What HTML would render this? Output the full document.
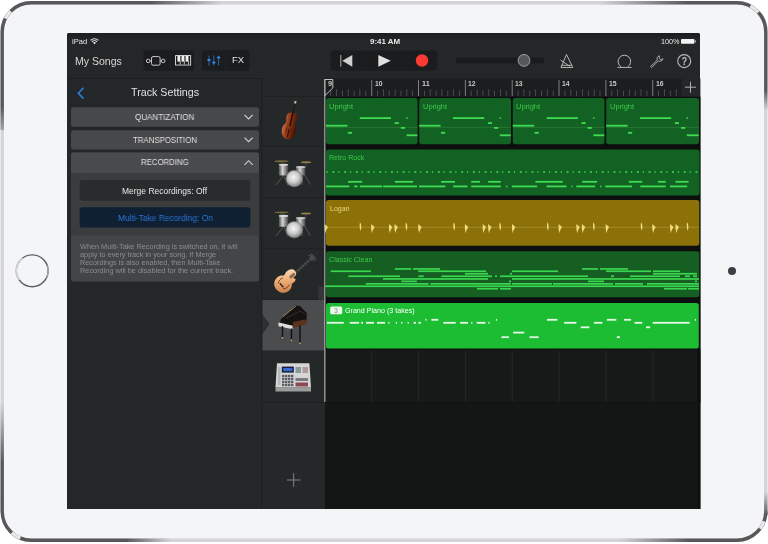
<!DOCTYPE html><html><head><meta charset="utf-8"><style>
*{margin:0;padding:0;box-sizing:border-box}
html,body{width:768px;height:544px;overflow:hidden;background:#fff;font-family:"Liberation Sans",sans-serif}
.a{position:absolute}
#screen{left:67px;top:33px;width:633.4px;height:476px;background:#252628;border-radius:2px;overflow:hidden}
.t{position:absolute;white-space:nowrap;line-height:1;will-change:transform}
</style></head><body><svg class="a" style="left:0;top:0" width="768" height="544" viewBox="0 0 768 544"><defs><linearGradient id="gT1" gradientUnits="userSpaceOnUse" x1="150" x2="222" y1="0" y2="0"><stop offset="0" stop-color="#58585b"/><stop offset="1" stop-color="#d4d4d6"/></linearGradient><linearGradient id="gT2" gradientUnits="userSpaceOnUse" x1="600" x2="688" y1="0" y2="0"><stop offset="0" stop-color="#d4d4d6"/><stop offset="1" stop-color="#58585b"/></linearGradient><linearGradient id="gB1" gradientUnits="userSpaceOnUse" x1="126" x2="170" y1="0" y2="0"><stop offset="0" stop-color="#58585b"/><stop offset="1" stop-color="#d4d4d6"/></linearGradient><linearGradient id="gB2" gradientUnits="userSpaceOnUse" x1="620" x2="690" y1="0" y2="0"><stop offset="0" stop-color="#d4d4d6"/><stop offset="1" stop-color="#58585b"/></linearGradient><linearGradient id="gL1" gradientUnits="userSpaceOnUse" x1="0" x2="0" y1="107" y2="145"><stop offset="0" stop-color="#58585b"/><stop offset="1" stop-color="#d4d4d6"/></linearGradient><linearGradient id="gL2" gradientUnits="userSpaceOnUse" x1="0" x2="0" y1="404" y2="463"><stop offset="0" stop-color="#d4d4d6"/><stop offset="1" stop-color="#58585b"/></linearGradient><linearGradient id="gR1" gradientUnits="userSpaceOnUse" x1="0" x2="0" y1="90" y2="110"><stop offset="0" stop-color="#58585b"/><stop offset="1" stop-color="#d4d4d6"/></linearGradient><linearGradient id="gR2" gradientUnits="userSpaceOnUse" x1="0" x2="0" y1="492" y2="515"><stop offset="0" stop-color="#d4d4d6"/><stop offset="1" stop-color="#58585b"/></linearGradient></defs><rect x="2.2" y="2.7" width="763.6" height="537.6" rx="29" fill="#f4f5f7" stroke="#d4d4d6" stroke-width="3.4"/><path d="M2.2,107 V31.7 A29,29 0 0 1 31.2,2.7 H150" stroke="#58585b" stroke-width="3.4" fill="none"/><path d="M688,2.7 H736.8 A29,29 0 0 1 765.8,31.7 V90" stroke="#58585b" stroke-width="3.4" fill="none"/><path d="M765.8,515 V511.29999999999995 A29,29 0 0 1 736.8,540.3 H690" stroke="#58585b" stroke-width="3.4" fill="none"/><path d="M126,540.3 H31.2 A29,29 0 0 1 2.2,511.29999999999995 V463" stroke="#58585b" stroke-width="3.4" fill="none"/><path d="M150,2.7 H222" stroke="url(#gT1)" stroke-width="3.4" fill="none"/><path d="M600,2.7 H688" stroke="url(#gT2)" stroke-width="3.4" fill="none"/><path d="M126,540.3 H170" stroke="url(#gB1)" stroke-width="3.4" fill="none"/><path d="M620,540.3 H690" stroke="url(#gB2)" stroke-width="3.4" fill="none"/><path d="M2.2,107 V130" stroke="url(#gL1)" stroke-width="3.4" fill="none"/><path d="M2.2,404 V463" stroke="url(#gL2)" stroke-width="3.4" fill="none"/><path d="M765.8,90 V110" stroke="url(#gR1)" stroke-width="3.4" fill="none"/><path d="M765.8,492 V515" stroke="url(#gR2)" stroke-width="3.4" fill="none"/><path d="M5.36,18.53 A29,29 0 0 1 10.69,11.19" stroke="#e8e8ea" stroke-width="3.4" fill="none"/><path d="M750.41,6.09 A29,29 0 0 1 758.35,12.30" stroke="#e8e8ea" stroke-width="3.4" fill="none"/><path d="M20.34,538.19 A29,29 0 0 1 11.80,532.85" stroke="#e8e8ea" stroke-width="3.4" fill="none"/><path d="M764.05,521.22 A29,29 0 0 1 759.96,528.75" stroke="#e8e8ea" stroke-width="3.4" fill="none"/></svg><svg class="a" style="left:0;top:230px" width="70" height="80" viewBox="0 230 70 80"><defs><linearGradient id="hb" x1="0" x2="1" y1="0" y2="1"><stop offset="0" stop-color="#c8c8ca"/><stop offset=".35" stop-color="#5a5a5c"/><stop offset=".6" stop-color="#9a9a9c"/><stop offset="1" stop-color="#4a4a4c"/></linearGradient></defs><circle cx="32.2" cy="270.8" r="15.9" fill="none" stroke="#5c5c5e" stroke-width="1.4"/><path d="M19.2,280 A15.9,15.9 0 0 1 22.5,258.2" fill="none" stroke="#d6d6d8" stroke-width="1.6"/><path d="M46.6,277.5 A15.9,15.9 0 0 0 47.5,266" fill="none" stroke="#a6a6a8" stroke-width="1.5"/></svg><div class="a" style="left:727.7px;top:266.6px;width:8.6px;height:8.6px;border-radius:50%;background:#3b3e46"></div><div id="screen" class="a"><div class="a" style="left:0;top:0;width:100%;height:7px;background:linear-gradient(#1b1c1e,#252628)"></div></div><svg class="a" style="left:0;top:0" width="768" height="544" viewBox="0 0 768 544"><rect x="67" y="78.6" width="195" height="430.4" fill="#24272a"/><rect x="67" y="78.2" width="195" height="0.8" fill="#1b1c1e"/><rect x="261.5" y="78.6" width="1" height="430.4" fill="#1b1c1e"/><rect x="71" y="107.3" width="188" height="19.5" rx="2.5" fill="#47484a"/><rect x="71" y="130.2" width="188" height="19.3" rx="2.5" fill="#47484a"/><rect x="71" y="152.6" width="188" height="129" rx="2.5" fill="#444547"/><rect x="71" y="152.6" width="188" height="20.3" rx="2.5" fill="#4a4b4d"/><rect x="71" y="172.9" width="188" height="62.5" fill="#3b3c3e"/><rect x="79.7" y="180" width="170.6" height="20.8" rx="2.5" fill="#2a2b2d"/><rect x="79.7" y="207.3" width="170.6" height="20.3" rx="2.5" fill="#0f2033"/><polyline points="244.5,114.8 248.6,118.9 252.7,114.8" fill="none" stroke="#d0d0d0" stroke-width="1.1"/><polyline points="244.5,137.6 248.6,141.7 252.7,137.6" fill="none" stroke="#d0d0d0" stroke-width="1.1"/><polyline points="244.5,164.8 248.6,160.7 252.7,164.8" fill="none" stroke="#d0d0d0" stroke-width="1.1"/><polyline points="83.5,87.8 78.3,93.2 83.5,98.6" fill="none" stroke="#2f7de0" stroke-width="1.6"/><rect x="262.5" y="78.6" width="62.5" height="430.4" fill="#252829"/><rect x="262.5" y="96.1" width="62.5" height="0.8" fill="#1d1f21"/><rect x="262.5" y="146.1" width="62.5" height="0.8" fill="#1d1f21"/><rect x="262.5" y="197.2" width="62.5" height="0.8" fill="#1d1f21"/><rect x="262.5" y="248.3" width="62.5" height="0.8" fill="#1d1f21"/><rect x="262.5" y="299.4" width="62.5" height="0.8" fill="#1d1f21"/><rect x="262.5" y="350.1" width="62.5" height="0.8" fill="#1d1f21"/><rect x="262.5" y="401.5" width="62.5" height="0.8" fill="#1d1f21"/><path d="M262.5,299.9 H324.8 V350.4 H262.5 V333.6 L269.4,324.2 L262.5,314.8 Z" fill="#4b4c4e"/><path d="M262.5,314.8 L269.4,324.2 L262.5,333.6 Z" fill="#2e3032"/><path d="M287,480 H300.5 M293.7,473.2 V486.8" stroke="#8e8e8e" stroke-width="0.9"/><rect x="325" y="96.5" width="375.4" height="412.5" fill="#141616"/><rect x="697.6" y="349.5" width="2.8" height="159.5" fill="#0f1010"/><rect x="325" y="96.5" width="375.4" height="306" fill="#0d0e0e"/><rect x="325" y="349.5" width="372.6" height="52.5" fill="#171919"/><rect x="371.3" y="350.6" width="0.9" height="51.4" fill="#262728"/><rect x="418.1" y="350.6" width="0.9" height="51.4" fill="#262728"/><rect x="465.0" y="350.6" width="0.9" height="51.4" fill="#262728"/><rect x="511.8" y="350.6" width="0.9" height="51.4" fill="#262728"/><rect x="558.6" y="350.6" width="0.9" height="51.4" fill="#262728"/><rect x="605.5" y="350.6" width="0.9" height="51.4" fill="#262728"/><rect x="652.4" y="350.6" width="0.9" height="51.4" fill="#262728"/><rect x="325" y="78.6" width="356.7" height="18" fill="#1c1d1f"/><rect x="681.7" y="78.6" width="18.7" height="18" fill="#252628"/><path d="M685,87.2 H696 M690.5,81.7 V92.7" stroke="#b0b0b0" stroke-width="1"/><rect x="324.3" y="80" width="1" height="16" fill="#7e7e7e"/><rect x="330.3" y="90.6" width="0.8" height="5.7" fill="#545557"/><rect x="336.1" y="89.2" width="0.8" height="7.1" fill="#545557"/><rect x="342.0" y="90.6" width="0.8" height="5.7" fill="#545557"/><rect x="347.8" y="89.2" width="0.8" height="7.1" fill="#545557"/><rect x="353.7" y="90.6" width="0.8" height="5.7" fill="#545557"/><rect x="359.5" y="89.2" width="0.8" height="7.1" fill="#545557"/><rect x="365.4" y="90.6" width="0.8" height="5.7" fill="#545557"/><rect x="371.2" y="80" width="1" height="16" fill="#7e7e7e"/><rect x="377.1" y="90.6" width="0.8" height="5.7" fill="#545557"/><rect x="383.0" y="89.2" width="0.8" height="7.1" fill="#545557"/><rect x="388.8" y="90.6" width="0.8" height="5.7" fill="#545557"/><rect x="394.7" y="89.2" width="0.8" height="7.1" fill="#545557"/><rect x="400.5" y="90.6" width="0.8" height="5.7" fill="#545557"/><rect x="406.4" y="89.2" width="0.8" height="7.1" fill="#545557"/><rect x="412.2" y="90.6" width="0.8" height="5.7" fill="#545557"/><rect x="418.0" y="80" width="1" height="16" fill="#7e7e7e"/><rect x="424.0" y="90.6" width="0.8" height="5.7" fill="#545557"/><rect x="429.8" y="89.2" width="0.8" height="7.1" fill="#545557"/><rect x="435.7" y="90.6" width="0.8" height="5.7" fill="#545557"/><rect x="441.5" y="89.2" width="0.8" height="7.1" fill="#545557"/><rect x="447.4" y="90.6" width="0.8" height="5.7" fill="#545557"/><rect x="453.2" y="89.2" width="0.8" height="7.1" fill="#545557"/><rect x="459.1" y="90.6" width="0.8" height="5.7" fill="#545557"/><rect x="464.9" y="80" width="1" height="16" fill="#7e7e7e"/><rect x="470.8" y="90.6" width="0.8" height="5.7" fill="#545557"/><rect x="476.7" y="89.2" width="0.8" height="7.1" fill="#545557"/><rect x="482.5" y="90.6" width="0.8" height="5.7" fill="#545557"/><rect x="488.4" y="89.2" width="0.8" height="7.1" fill="#545557"/><rect x="494.2" y="90.6" width="0.8" height="5.7" fill="#545557"/><rect x="500.1" y="89.2" width="0.8" height="7.1" fill="#545557"/><rect x="505.9" y="90.6" width="0.8" height="5.7" fill="#545557"/><rect x="511.7" y="80" width="1" height="16" fill="#7e7e7e"/><rect x="517.7" y="90.6" width="0.8" height="5.7" fill="#545557"/><rect x="523.5" y="89.2" width="0.8" height="7.1" fill="#545557"/><rect x="529.4" y="90.6" width="0.8" height="5.7" fill="#545557"/><rect x="535.2" y="89.2" width="0.8" height="7.1" fill="#545557"/><rect x="541.1" y="90.6" width="0.8" height="5.7" fill="#545557"/><rect x="546.9" y="89.2" width="0.8" height="7.1" fill="#545557"/><rect x="552.8" y="90.6" width="0.8" height="5.7" fill="#545557"/><rect x="558.5" y="80" width="1" height="16" fill="#7e7e7e"/><rect x="564.5" y="90.6" width="0.8" height="5.7" fill="#545557"/><rect x="570.4" y="89.2" width="0.8" height="7.1" fill="#545557"/><rect x="576.2" y="90.6" width="0.8" height="5.7" fill="#545557"/><rect x="582.1" y="89.2" width="0.8" height="7.1" fill="#545557"/><rect x="587.9" y="90.6" width="0.8" height="5.7" fill="#545557"/><rect x="593.8" y="89.2" width="0.8" height="7.1" fill="#545557"/><rect x="599.6" y="90.6" width="0.8" height="5.7" fill="#545557"/><rect x="605.4" y="80" width="1" height="16" fill="#7e7e7e"/><rect x="611.4" y="90.6" width="0.8" height="5.7" fill="#545557"/><rect x="617.2" y="89.2" width="0.8" height="7.1" fill="#545557"/><rect x="623.1" y="90.6" width="0.8" height="5.7" fill="#545557"/><rect x="628.9" y="89.2" width="0.8" height="7.1" fill="#545557"/><rect x="634.8" y="90.6" width="0.8" height="5.7" fill="#545557"/><rect x="640.6" y="89.2" width="0.8" height="7.1" fill="#545557"/><rect x="646.5" y="90.6" width="0.8" height="5.7" fill="#545557"/><rect x="652.2" y="80" width="1" height="16" fill="#7e7e7e"/><rect x="658.2" y="90.6" width="0.8" height="5.7" fill="#545557"/><rect x="664.1" y="89.2" width="0.8" height="7.1" fill="#545557"/><rect x="669.9" y="90.6" width="0.8" height="5.7" fill="#545557"/><rect x="675.8" y="89.2" width="0.8" height="7.1" fill="#545557"/><rect x="326" y="98" width="91.6" height="46.2" rx="2.6" fill="#126224"/><rect x="326" y="126.9" width="91.6" height="0.7" fill="#2f7c38"/><g fill="#3fdc52"><rect x="325.9" y="124.8" width="21.5" height="1.8"/><rect x="347.8" y="131.9" width="4.2" height="1.8"/><rect x="359.8" y="117.2" width="31.2" height="1.8"/><rect x="394.7" y="122.2" width="4.1" height="1.8"/><rect x="406.4" y="117.2" width="1.2" height="1.8"/><rect x="400.8" y="127.0" width="4.2" height="1.8"/><rect x="406.6" y="134.4" width="10.7" height="1.8"/></g><rect x="419.2" y="98" width="91.8" height="46.2" rx="2.6" fill="#126224"/><rect x="419.2" y="126.9" width="91.8" height="0.7" fill="#2f7c38"/><g fill="#3fdc52"><rect x="419.1" y="124.8" width="21.5" height="1.8"/><rect x="441.0" y="131.9" width="4.2" height="1.8"/><rect x="453.0" y="117.2" width="31.2" height="1.8"/><rect x="487.9" y="122.2" width="4.1" height="1.8"/><rect x="499.6" y="117.2" width="1.2" height="1.8"/><rect x="494.0" y="127.0" width="4.2" height="1.8"/><rect x="499.8" y="134.4" width="10.9" height="1.8"/></g><rect x="512.8" y="98" width="91.7" height="46.2" rx="2.6" fill="#126224"/><rect x="512.8" y="126.9" width="91.7" height="0.7" fill="#2f7c38"/><g fill="#3fdc52"><rect x="512.7" y="124.8" width="21.5" height="1.8"/><rect x="534.6" y="131.9" width="4.2" height="1.8"/><rect x="546.6" y="117.2" width="31.2" height="1.8"/><rect x="581.5" y="122.2" width="4.1" height="1.8"/><rect x="593.2" y="117.2" width="1.2" height="1.8"/><rect x="587.6" y="127.0" width="4.2" height="1.8"/><rect x="593.4" y="134.4" width="10.8" height="1.8"/></g><rect x="606.2" y="98" width="92.8" height="46.2" rx="2.6" fill="#126224"/><rect x="606.2" y="126.9" width="92.8" height="0.7" fill="#2f7c38"/><g fill="#3fdc52"><rect x="606.1" y="124.8" width="21.5" height="1.8"/><rect x="628.0" y="131.9" width="4.2" height="1.8"/><rect x="640.0" y="117.2" width="31.2" height="1.8"/><rect x="674.9" y="122.2" width="4.1" height="1.8"/><rect x="686.6" y="117.2" width="1.2" height="1.8"/><rect x="681.0" y="127.0" width="4.2" height="1.8"/><rect x="686.8" y="134.4" width="11.9" height="1.8"/></g><rect x="326" y="149.5" width="373.5" height="46.1" rx="2.6" fill="#126224"/><g fill="#3fdc52"><rect x="326.5" y="171.2" width="1.2" height="1.5"/><rect x="332.4" y="171.2" width="2.0" height="1.5"/><rect x="338.2" y="171.2" width="1.2" height="1.5"/><rect x="344.1" y="171.2" width="2.0" height="1.5"/><rect x="349.9" y="171.2" width="1.2" height="1.5"/><rect x="355.8" y="171.2" width="2.0" height="1.5"/><rect x="361.6" y="171.2" width="1.2" height="1.5"/><rect x="367.5" y="171.2" width="2.0" height="1.5"/><rect x="373.3" y="171.2" width="1.2" height="1.5"/><rect x="379.2" y="171.2" width="2.0" height="1.5"/><rect x="385.1" y="171.2" width="1.2" height="1.5"/><rect x="390.9" y="171.2" width="2.0" height="1.5"/><rect x="396.8" y="171.2" width="1.2" height="1.5"/><rect x="402.6" y="171.2" width="2.0" height="1.5"/><rect x="408.5" y="171.2" width="1.2" height="1.5"/><rect x="414.3" y="171.2" width="2.0" height="1.5"/><rect x="420.2" y="171.2" width="1.2" height="1.5"/><rect x="426.1" y="171.2" width="2.0" height="1.5"/><rect x="431.9" y="171.2" width="1.2" height="1.5"/><rect x="437.8" y="171.2" width="2.0" height="1.5"/><rect x="443.6" y="171.2" width="1.2" height="1.5"/><rect x="449.5" y="171.2" width="2.0" height="1.5"/><rect x="455.3" y="171.2" width="1.2" height="1.5"/><rect x="461.2" y="171.2" width="2.0" height="1.5"/><rect x="467.0" y="171.2" width="1.2" height="1.5"/><rect x="472.9" y="171.2" width="2.0" height="1.5"/><rect x="478.8" y="171.2" width="1.2" height="1.5"/><rect x="484.6" y="171.2" width="2.0" height="1.5"/><rect x="490.5" y="171.2" width="1.2" height="1.5"/><rect x="496.3" y="171.2" width="2.0" height="1.5"/><rect x="502.2" y="171.2" width="1.2" height="1.5"/><rect x="508.0" y="171.2" width="2.0" height="1.5"/><rect x="513.9" y="171.2" width="1.2" height="1.5"/><rect x="519.8" y="171.2" width="2.0" height="1.5"/><rect x="525.6" y="171.2" width="1.2" height="1.5"/><rect x="531.5" y="171.2" width="2.0" height="1.5"/><rect x="537.3" y="171.2" width="1.2" height="1.5"/><rect x="543.2" y="171.2" width="2.0" height="1.5"/><rect x="549.0" y="171.2" width="1.2" height="1.5"/><rect x="554.9" y="171.2" width="2.0" height="1.5"/><rect x="560.8" y="171.2" width="1.2" height="1.5"/><rect x="566.6" y="171.2" width="2.0" height="1.5"/><rect x="572.5" y="171.2" width="1.2" height="1.5"/><rect x="578.3" y="171.2" width="2.0" height="1.5"/><rect x="584.2" y="171.2" width="1.2" height="1.5"/><rect x="590.0" y="171.2" width="2.0" height="1.5"/><rect x="595.9" y="171.2" width="1.2" height="1.5"/><rect x="601.7" y="171.2" width="2.0" height="1.5"/><rect x="607.6" y="171.2" width="1.2" height="1.5"/><rect x="613.5" y="171.2" width="2.0" height="1.5"/><rect x="619.3" y="171.2" width="1.2" height="1.5"/><rect x="625.2" y="171.2" width="2.0" height="1.5"/><rect x="631.0" y="171.2" width="1.2" height="1.5"/><rect x="636.9" y="171.2" width="2.0" height="1.5"/><rect x="642.7" y="171.2" width="1.2" height="1.5"/><rect x="648.6" y="171.2" width="2.0" height="1.5"/><rect x="654.5" y="171.2" width="1.2" height="1.5"/><rect x="660.3" y="171.2" width="2.0" height="1.5"/><rect x="666.2" y="171.2" width="1.2" height="1.5"/><rect x="672.0" y="171.2" width="2.0" height="1.5"/><rect x="677.9" y="171.2" width="1.2" height="1.5"/><rect x="683.7" y="171.2" width="2.0" height="1.5"/><rect x="689.6" y="171.2" width="1.2" height="1.5"/><rect x="695.4" y="171.2" width="2.0" height="1.5"/><rect x="348.0" y="180.9" width="14.1" height="1.8"/><rect x="394.9" y="180.9" width="18.2" height="1.8"/><rect x="441.1" y="180.9" width="13.9" height="1.8"/><rect x="471.2" y="180.9" width="8.7" height="1.8"/><rect x="488.2" y="180.9" width="12.6" height="1.8"/><rect x="535.4" y="180.9" width="27.4" height="1.8"/><rect x="582.2" y="180.9" width="14.8" height="1.8"/><rect x="628.8" y="180.9" width="13.5" height="1.8"/><rect x="658.0" y="180.9" width="7.7" height="1.8"/><rect x="675.5" y="180.9" width="13.0" height="1.8"/><rect x="326.0" y="185.5" width="23.3" height="1.8"/><rect x="354.3" y="185.5" width="3.2" height="1.8"/><rect x="359.8" y="185.5" width="22.4" height="1.8"/><rect x="383.2" y="185.5" width="33.8" height="1.8"/><rect x="419.0" y="185.5" width="26.4" height="1.8"/><rect x="453.1" y="185.5" width="14.4" height="1.8"/><rect x="471.2" y="185.5" width="29.6" height="1.8"/><rect x="506.2" y="185.5" width="1.2" height="1.8"/><rect x="511.9" y="185.5" width="25.3" height="1.8"/><rect x="546.5" y="185.5" width="20.0" height="1.8"/><rect x="571.5" y="185.5" width="1.2" height="1.8"/><rect x="576.3" y="185.5" width="18.8" height="1.8"/><rect x="600.2" y="185.5" width="1.2" height="1.8"/><rect x="605.3" y="185.5" width="26.8" height="1.8"/><rect x="640.4" y="185.5" width="25.3" height="1.8"/><rect x="670.0" y="185.5" width="17.2" height="1.8"/></g><rect x="326" y="200.1" width="373.3" height="45.6" rx="2.6" fill="#8c7109"/><rect x="326" y="226.9" width="373" height="0.6" fill="#b89a3a"/><g fill="#f2dc7a"><path d="M324.6,224.1 L328.0,227.1 L326.2,230.3 L325.4,233.3 L324.6,229.3 Z"/><path d="M360.0,222.3 C361.6,224.3 361.6,228.3 360.6,230.8 C359.4,228.3 359.4,224.3 360.0,222.3 Z"/><path d="M371.2,224.1 L374.6,227.1 L372.8,230.3 L372.0,233.3 L371.2,229.3 Z"/><path d="M389.0,224.1 L392.4,227.1 L390.6,230.3 L389.8,233.3 L389.0,229.3 Z"/><path d="M394.5,224.1 L397.9,227.1 L396.1,230.3 L395.3,233.3 L394.5,229.3 Z"/><path d="M406.0,222.3 C407.6,224.3 407.6,228.3 406.6,230.8 C405.4,228.3 405.4,224.3 406.0,222.3 Z"/><path d="M418.3,224.1 L421.7,227.1 L419.9,230.3 L419.1,233.3 L418.3,229.3 Z"/><path d="M453.7,222.3 C455.3,224.3 455.3,228.3 454.3,230.8 C453.1,228.3 453.1,224.3 453.7,222.3 Z"/><path d="M464.9,224.1 L468.3,227.1 L466.5,230.3 L465.7,233.3 L464.9,229.3 Z"/><path d="M482.7,224.1 L486.1,227.1 L484.3,230.3 L483.5,233.3 L482.7,229.3 Z"/><path d="M488.2,224.1 L491.6,227.1 L489.8,230.3 L489.0,233.3 L488.2,229.3 Z"/><path d="M499.7,222.3 C501.3,224.3 501.3,228.3 500.3,230.8 C499.1,228.3 499.1,224.3 499.7,222.3 Z"/><path d="M512.0,224.1 L515.4,227.1 L513.6,230.3 L512.8,233.3 L512.0,229.3 Z"/><path d="M547.4,222.3 C549.0,224.3 549.0,228.3 548.0,230.8 C546.8,228.3 546.8,224.3 547.4,222.3 Z"/><path d="M558.6,224.1 L562.0,227.1 L560.2,230.3 L559.4,233.3 L558.6,229.3 Z"/><path d="M576.4,224.1 L579.8,227.1 L578.0,230.3 L577.2,233.3 L576.4,229.3 Z"/><path d="M581.9,224.1 L585.3,227.1 L583.5,230.3 L582.7,233.3 L581.9,229.3 Z"/><path d="M593.4,222.3 C595.0,224.3 595.0,228.3 594.0,230.8 C592.8,228.3 592.8,224.3 593.4,222.3 Z"/><path d="M605.7,224.1 L609.1,227.1 L607.3,230.3 L606.5,233.3 L605.7,229.3 Z"/><path d="M641.1,222.3 C642.7,224.3 642.7,228.3 641.7,230.8 C640.5,228.3 640.5,224.3 641.1,222.3 Z"/><path d="M652.3,224.1 L655.7,227.1 L653.9,230.3 L653.1,233.3 L652.3,229.3 Z"/><path d="M670.1,224.1 L673.5,227.1 L671.7,230.3 L670.9,233.3 L670.1,229.3 Z"/><path d="M675.6,224.1 L679.0,227.1 L677.2,230.3 L676.4,233.3 L675.6,229.3 Z"/><path d="M687.1,222.3 C688.7,224.3 688.7,228.3 687.7,230.8 C686.5,228.3 686.5,224.3 687.1,222.3 Z"/></g><rect x="326" y="251.3" width="373.3" height="45.9" rx="2.6" fill="#155f23"/><g fill="#3bd64f"><rect x="394.9" y="268.1" width="16.4" height="1.7"/><rect x="413.1" y="268.1" width="27.0" height="1.7"/><rect x="582.0" y="268.1" width="16.0" height="1.7"/><rect x="600.0" y="268.1" width="28.0" height="1.7"/><rect x="330.7" y="270.4" width="40.2" height="1.7"/><rect x="418.2" y="270.4" width="67.8" height="1.7"/><rect x="512.0" y="270.4" width="46.0" height="1.7"/><rect x="606.0" y="270.4" width="45.0" height="1.7"/><rect x="653.0" y="270.4" width="27.0" height="1.7"/><rect x="465.0" y="272.9" width="23.0" height="1.7"/><rect x="510.0" y="272.9" width="2.0" height="1.7"/><rect x="653.0" y="272.9" width="44.0" height="1.7"/><rect x="348.4" y="275.4" width="51.6" height="1.7"/><rect x="418.6" y="275.4" width="5.1" height="1.7"/><rect x="441.4" y="275.4" width="50.6" height="1.7"/><rect x="495.0" y="275.4" width="2.0" height="1.7"/><rect x="500.0" y="275.4" width="12.0" height="1.7"/><rect x="512.0" y="275.4" width="76.0" height="1.7"/><rect x="611.0" y="275.4" width="3.0" height="1.7"/><rect x="630.0" y="275.4" width="50.0" height="1.7"/><rect x="685.0" y="275.4" width="5.0" height="1.7"/><rect x="693.0" y="275.4" width="4.0" height="1.7"/><rect x="383.0" y="278.1" width="105.0" height="1.7"/><rect x="512.0" y="278.1" width="187.0" height="1.7"/><rect x="401.3" y="280.5" width="15.5" height="1.7"/><rect x="509.0" y="280.5" width="2.0" height="1.7"/><rect x="588.0" y="280.5" width="16.0" height="1.7"/><rect x="695.0" y="280.5" width="2.0" height="1.7"/><rect x="365.7" y="283.0" width="62.9" height="1.7"/><rect x="430.5" y="283.0" width="80.5" height="1.7"/><rect x="512.0" y="283.0" width="40.0" height="1.7"/><rect x="553.0" y="283.0" width="60.0" height="1.7"/><rect x="615.0" y="283.0" width="28.0" height="1.7"/><rect x="647.0" y="283.0" width="52.0" height="1.7"/><rect x="325.3" y="285.4" width="373.7" height="1.7"/><rect x="477.0" y="287.9" width="21.0" height="1.7"/><rect x="500.0" y="287.9" width="11.0" height="1.7"/><rect x="664.0" y="287.9" width="23.0" height="1.7"/><rect x="688.0" y="287.9" width="11.0" height="1.7"/></g><rect x="326" y="303" width="372.8" height="45.6" rx="2.6" fill="#1cbd33"/><g fill="#e6f7e6"><rect x="327.0" y="321.9" width="16.8" height="1.8"/><rect x="349.7" y="321.9" width="9.4" height="1.8"/><rect x="361.1" y="321.9" width="1.9" height="1.8"/><rect x="366.0" y="321.9" width="8.0" height="1.8"/><rect x="377.0" y="321.9" width="8.1" height="1.8"/><rect x="388.3" y="321.9" width="1.2" height="1.8"/><rect x="395.8" y="321.9" width="1.2" height="1.8"/><rect x="401.2" y="321.9" width="1.2" height="1.8"/><rect x="407.6" y="321.9" width="1.2" height="1.8"/><rect x="413.6" y="321.9" width="2.4" height="1.8"/><rect x="418.5" y="321.9" width="2.5" height="1.8"/><rect x="443.3" y="321.9" width="12.4" height="1.8"/><rect x="460.1" y="321.9" width="7.9" height="1.8"/><rect x="471.2" y="321.9" width="1.2" height="1.8"/><rect x="476.7" y="321.9" width="8.7" height="1.8"/><rect x="488.4" y="321.9" width="1.2" height="1.8"/><rect x="564.2" y="321.9" width="12.2" height="1.8"/><rect x="593.9" y="321.9" width="8.5" height="1.8"/><rect x="634.5" y="321.9" width="7.8" height="1.8"/><rect x="652.7" y="321.9" width="37.0" height="1.8"/><rect x="425.4" y="318.9" width="1.2" height="1.8"/><rect x="431.4" y="318.9" width="6.9" height="1.8"/><rect x="495.9" y="318.9" width="1.2" height="1.8"/><rect x="547.0" y="318.9" width="10.4" height="1.8"/><rect x="606.9" y="318.9" width="9.4" height="1.8"/><rect x="624.0" y="318.9" width="7.1" height="1.8"/><rect x="694.8" y="318.9" width="1.2" height="1.8"/><rect x="501.5" y="336.3" width="7.4" height="1.8"/><rect x="529.5" y="336.3" width="9.1" height="1.8"/><rect x="616.8" y="336.3" width="3.1" height="1.8"/><rect x="513.1" y="331.7" width="11.2" height="1.8"/><rect x="580.8" y="326.4" width="8.6" height="1.8"/><rect x="646.0" y="326.4" width="4.1" height="1.8"/></g><rect x="330.2" y="306.4" width="12" height="7.8" rx="1.5" fill="#eef8ee"/><rect x="324.3" y="79" width="1.1" height="323" fill="#b9b9b9"/><path d="M324.8,79.5 H332.8 V88 L325,95.5" fill="none" stroke="#c0c0c0" stroke-width="1"/><rect x="318.5" y="286.6" width="5.5" height="13.3" fill="#34373a"/><rect x="143.5" y="50.3" width="50.6" height="20.4" rx="3" fill="#1b1c1e"/><rect x="170" y="51" width="0.7" height="19" fill="#232426"/><rect x="202" y="50.3" width="47.5" height="20.4" rx="3" fill="#1b1c1e"/><rect x="225.5" y="51" width="0.7" height="19" fill="#232426"/><rect x="330.5" y="50.4" width="106.7" height="20.3" rx="3" fill="#1b1c1e"/><rect x="361" y="51" width="0.7" height="19" fill="#202123"/><rect x="405.5" y="51" width="0.7" height="19" fill="#202123"/><g fill="none" stroke="#c8c8c8" stroke-width="1"><rect x="151.5" y="56.6" width="8.6" height="8.6" rx="1.5"/><circle cx="148.2" cy="60.9" r="1.8"/><circle cx="163.2" cy="60.9" r="1.8"/><path d="M150,60.9 H151.5 M160.1,60.9 H161.4"/></g><rect x="175" y="55" width="16.1" height="10.6" rx="0.6" fill="#cfcfcf"/><rect x="176" y="56" width="14.1" height="8.6" fill="#1d1e20"/><g fill="#efefef"><rect x="177.4" y="56" width="2.9" height="5.6"/><rect x="181.5" y="56" width="2.9" height="5.6"/><rect x="185.6" y="56" width="2.9" height="5.6"/></g><g fill="#bdbdbd"><rect x="179.7" y="61" width="1" height="3.6"/><rect x="183.8" y="61" width="1" height="3.6"/><rect x="187.9" y="61" width="1" height="3.6"/></g><g stroke="#2a78d8" stroke-width="0.8"><path d="M209,55.5 V65.5 M213.8,55.5 V65.5 M218.6,55.5 V65.5"/></g><g fill="#3a88ea"><ellipse cx="209" cy="60.2" rx="1.8" ry="1.1"/><ellipse cx="213.8" cy="62.6" rx="1.8" ry="1.1"/><ellipse cx="218.6" cy="57.6" rx="1.8" ry="1.1"/></g><path d="M340.8,55 V66.7" stroke="#a0a0a0" stroke-width="1.1"/><path d="M352.3,55 V66.7 L342.3,60.85 Z" fill="#d0d0d0"/><path d="M378.3,55 L390.8,60.85 L378.3,66.7 Z" fill="#e0e0e0"/><circle cx="422" cy="60.5" r="6.2" fill="#fb3a32"/><rect x="456" y="57.7" width="88" height="5.6" rx="1.8" fill="#1a1b1d"/><circle cx="524" cy="60.4" r="5.9" fill="#57585a" stroke="#a8a8a8" stroke-width="0.9"/><g fill="none" stroke="#c0c0c0" stroke-width="0.9"><path d="M566.5,54.5 L561,67.5 H572.8 Z"/><path d="M560.5,60 L570,66.5"/><path d="M561.5,65.3 H572"/></g><g fill="none" stroke="#b8b8b8" stroke-width="1"><path d="M621,66.8 A6.3,6.3 0 1 1 627.8,66.8"/><path d="M617.5,67.4 H631.6"/></g><g fill="none" stroke="#b8b8b8" stroke-width="0.9"><path d="M650.6,66.6 L657.3,59.9"/><path d="M651.6,67.6 L658.3,60.9"/><path d="M650.6,66.6 L651.6,67.6"/><path d="M657.3,59.9 A3.3,3.3 0 0 1 659.5,55.8 L659.2,58.4 L660.5,59.6 L663,58.8 A3.3,3.3 0 0 1 658.3,60.9"/></g><circle cx="684.2" cy="61.1" r="6.5" fill="none" stroke="#b8b8b8" stroke-width="1.1"/><g fill="#e8e8e8" transform="translate(0 0.8)"><path d="M90.2,39.2 A6,6 0 0 1 98.8,39.2 L98,40 A4.9,4.9 0 0 0 91,40 Z"/><path d="M91.6,40.6 A4,4 0 0 1 97.4,40.6 L96.6,41.4 A2.9,2.9 0 0 0 92.4,41.4 Z"/><path d="M93,42 A2,2 0 0 1 96,42 L94.5,43.5 Z"/></g><rect x="681" y="39" width="13.4" height="4.8" rx="0.8" fill="#f2f2f2"/><rect x="694.6" y="40.4" width="1.2" height="2" fill="#d0d0d0"/><defs><linearGradient id="cg" x1="0" x2="1" y1="0" y2="0"><stop offset="0" stop-color="#c87048"/><stop offset=".3" stop-color="#9a3e1a"/><stop offset=".7" stop-color="#6e240c"/><stop offset="1" stop-color="#3a1006"/></linearGradient><radialGradient id="bd" cx=".45" cy=".42" r=".6"><stop offset="0" stop-color="#f4f4f4"/><stop offset=".5" stop-color="#cfcfcf"/><stop offset="1" stop-color="#7e7e7e"/></radialGradient><linearGradient id="tm" x1="0" x2="1"><stop offset="0" stop-color="#4a4a4a"/><stop offset=".4" stop-color="#d4d4d4"/><stop offset="1" stop-color="#404040"/></linearGradient><linearGradient id="gt" x1="0" x2="1" y1="0" y2="1"><stop offset="0" stop-color="#fde8cc"/><stop offset=".45" stop-color="#f0b07a"/><stop offset="1" stop-color="#c27440"/></linearGradient></defs><g transform="rotate(13 291 121)"><path d="M291,101 L291,126" stroke="#2a1a12" stroke-width="1.4"/><path d="M290,100.5 h2 v2.5 h-2 z" fill="#c8b8a0"/><path d="M291,112.5 C287.2,112.5 285.6,114.5 285.6,117.5 C285.6,120 286.4,121.5 286.4,123 C286.4,124.2 284,126 284,130.5 C284,135.8 287,139.5 291,139.5 C295,139.5 298,135.8 298,130.5 C298,126 295.6,124.2 295.6,123 C295.6,121.5 296.4,120 296.4,117.5 C296.4,114.5 294.8,112.5 291,112.5 Z" fill="url(#cg)"/><path d="M291,112 V126.5" stroke="#1e0c06" stroke-width="1.4"/><path d="M291,129 V137.5" stroke="#2a0e04" stroke-width="1.1"/><path d="M288.5,128 v5 M293.5,128 v5" stroke="#3a1408" stroke-width="0.6"/></g><g transform="translate(0 0)"><path d="M281.5,162 V166 M306,163 V168" stroke="#444" stroke-width="0.8"/><ellipse cx="281.5" cy="161.3" rx="7" ry="1.0" fill="#76663a"/><ellipse cx="306" cy="162.3" rx="5.2" ry="1.0" fill="#8e7e4a"/><rect x="278.8" y="164.6" width="9.5" height="11" rx="1" fill="url(#tm)"/><ellipse cx="283.55" cy="164.8" rx="4.75" ry="1.1" fill="#d8d8d8"/><rect x="296" y="166.8" width="9.5" height="8.5" rx="1" fill="url(#tm)"/><ellipse cx="300.75" cy="167" rx="4.75" ry="1.1" fill="#c8c8c8"/><path d="M283,176 L276,185 M284,176 L288,185.5 M304.5,175 L310.5,184.5 M303,175 L302,185" stroke="#5a5a5a" stroke-width="0.9"/><circle cx="294.3" cy="178.6" r="8.3" fill="url(#bd)"/><circle cx="294.3" cy="178.6" r="8.3" fill="none" stroke="#6a6a6a" stroke-width="0.6"/></g><g transform="translate(0 51.1)"><path d="M281.5,162 V166 M306,163 V168" stroke="#444" stroke-width="0.8"/><ellipse cx="281.5" cy="161.3" rx="7" ry="1.0" fill="#76663a"/><ellipse cx="306" cy="162.3" rx="5.2" ry="1.0" fill="#8e7e4a"/><rect x="278.8" y="164.6" width="9.5" height="11" rx="1" fill="url(#tm)"/><ellipse cx="283.55" cy="164.8" rx="4.75" ry="1.1" fill="#d8d8d8"/><rect x="296" y="166.8" width="9.5" height="8.5" rx="1" fill="url(#tm)"/><ellipse cx="300.75" cy="167" rx="4.75" ry="1.1" fill="#c8c8c8"/><path d="M283,176 L276,185 M284,176 L288,185.5 M304.5,175 L310.5,184.5 M303,175 L302,185" stroke="#5a5a5a" stroke-width="0.9"/><circle cx="294.3" cy="178.6" r="8.3" fill="url(#bd)"/><circle cx="294.3" cy="178.6" r="8.3" fill="none" stroke="#6a6a6a" stroke-width="0.6"/></g><g transform="translate(286.8 280.6) rotate(48) scale(1.05)"><rect x="-1.3" y="-30" width="2.6" height="22" fill="#3a3a3c"/><path d="M-1.3,-27 h2.6 M-1.3,-24 h2.6 M-1.3,-21 h2.6 M-1.3,-18 h2.6 M-1.3,-15 h2.6" stroke="#8a8a8a" stroke-width="0.4"/><path d="M-2,-30 L-2.2,-35 L2.2,-35 L2,-30 Z" fill="#4a4a4c"/><path d="M-2.6,-34 h-1 M-2.6,-32 h-1 M2.6,-34 h1 M2.6,-32 h1" stroke="#b0b0b0" stroke-width="0.7"/><path d="M0,13 C5,13 8.5,9.5 8.5,4.5 C8.5,1 6.5,-0.5 5.5,-1.5 C6,-3 6,-5 5,-7 L2,-6.5 L2,-10 C1,-11.5 -0.5,-12 -2,-12 C-5,-12 -6.5,-9 -6.5,-6 C-6.5,-3.5 -5,-2 -5.5,-1 C-7,0 -8.5,2 -8.5,4.5 C-8.5,9.5 -5,13 0,13 Z" fill="url(#gt)"/><rect x="-1.3" y="-10" width="2.6" height="6" fill="#3a3030" opacity=".6"/><path d="M-4.5,1 C-5.5,3 -5,6 -3.5,8 M4.5,1 C5.5,3 5,6 3.5,8" stroke="#6a3818" stroke-width="0.8" fill="none"/><rect x="-2.5" y="6" width="5" height="1.4" fill="#3a2a20"/></g><path d="M281,319 L295.5,305.5 L300,306 L306.8,313 L306.5,321.5 L292,325.5 L280,322.5 Z" fill="#161212"/><path d="M283,316.5 L296,306" stroke="#b08a58" stroke-width="0.9"/><path d="M286,318 L300,311 L305,314" stroke="#3a3434" stroke-width="0.8" fill="none"/><path d="M278.5,322.5 L292.5,325.8 L292.5,329.3 L278.5,326.2 Z" fill="#dedede"/><path d="M293,322 L306.5,319.2 L306.5,324.3 L293,328 Z" fill="#5c321c"/><path d="M282.5,326 V337.5 M291.5,328.5 V340 M300,325.5 V343" stroke="#101010" stroke-width="1.4"/><path d="M282.5,337 V338.5 M291.5,339.5 V341 M300,342.5 V344" stroke="#c8b070" stroke-width="1.4"/><path d="M277,363.3 H309.4 L311,387.5 H275.5 Z" fill="#d6d6d6"/><rect x="275.5" y="387.3" width="35.5" height="4.2" fill="#9c9c9c"/><rect x="281.8" y="366.6" width="12" height="6" fill="#141c3a"/><rect x="283.2" y="368" width="9.2" height="3.2" fill="#3a6ad0"/><rect x="295.5" y="367" width="5.5" height="6" fill="#8a9a9a"/><rect x="302.5" y="367" width="5.5" height="6" fill="#b09a9a"/><rect x="278" y="367" width="2.5" height="18" fill="#b8b8b8"/><rect x="282.0" y="374.8" width="2.4" height="2.4" fill="#5a5e66"/><rect x="285.0" y="374.8" width="2.4" height="2.4" fill="#5a5e66"/><rect x="288.0" y="374.8" width="2.4" height="2.4" fill="#5a5e66"/><rect x="291.0" y="374.8" width="2.4" height="2.4" fill="#5a5e66"/><rect x="282.0" y="377.8" width="2.4" height="2.4" fill="#5a5e66"/><rect x="285.0" y="377.8" width="2.4" height="2.4" fill="#5a5e66"/><rect x="288.0" y="377.8" width="2.4" height="2.4" fill="#5a5e66"/><rect x="291.0" y="377.8" width="2.4" height="2.4" fill="#5a5e66"/><rect x="282.0" y="380.8" width="2.4" height="2.4" fill="#5a5e66"/><rect x="285.0" y="380.8" width="2.4" height="2.4" fill="#5a5e66"/><rect x="288.0" y="380.8" width="2.4" height="2.4" fill="#5a5e66"/><rect x="291.0" y="380.8" width="2.4" height="2.4" fill="#5a5e66"/><rect x="282.0" y="383.8" width="2.4" height="2.4" fill="#5a5e66"/><rect x="285.0" y="383.8" width="2.4" height="2.4" fill="#5a5e66"/><rect x="288.0" y="383.8" width="2.4" height="2.4" fill="#5a5e66"/><rect x="291.0" y="383.8" width="2.4" height="2.4" fill="#5a5e66"/><rect x="295.5" y="382.5" width="12.5" height="4" fill="#8a4a52"/><rect x="295.5" y="378" width="12.5" height="3" fill="#7a7a80"/></svg><div class="t" style="left:71.62px;top:37.74px;font-size:7.4px;color:#e8e8e8;font-weight:normal;transform:scaleX(1.026);transform-origin:left top">iPad</div><div class="t" style="left:369.90px;top:37.96px;font-size:7.26px;color:#e8e8e8;font-weight:bold;transform:scaleX(1.098);transform-origin:left top">9:41 AM</div><div class="t" style="left:660.64px;top:37.86px;font-size:7.26px;color:#e8e8e8;font-weight:normal;transform:scaleX(0.992);transform-origin:left top">100%</div><div class="t" style="left:75.08px;top:55.53px;font-size:10.54px;color:#d8d8d8;font-weight:normal;transform:scaleX(0.994);transform-origin:left top">My Songs</div><div class="t" style="left:232.32px;top:55.46px;font-size:9.5px;color:#e0e0e0;font-weight:normal;transform:scaleX(1.001);transform-origin:left top">FX</div><div class="t" style="left:131.16px;top:88.35px;font-size:10.34px;color:#e0e0e0;font-weight:normal;transform:scaleX(1.037);transform-origin:left top">Track Settings</div><div class="t" style="left:135.30px;top:113.73px;font-size:8.24px;color:#e0e0e0;font-weight:normal;transform:scaleX(0.977);transform-origin:left top">QUANTIZATION</div><div class="t" style="left:133.21px;top:136.83px;font-size:8.24px;color:#e0e0e0;font-weight:normal;transform:scaleX(0.952);transform-origin:left top">TRANSPOSITION</div><div class="t" style="left:141.01px;top:159.13px;font-size:8.24px;color:#e0e0e0;font-weight:normal;transform:scaleX(0.946);transform-origin:left top">RECORDING</div><div class="t" style="left:122.28px;top:187.37px;font-size:8.31px;color:#e6e6e6;font-weight:normal;transform:scaleX(1.022);transform-origin:left top">Merge Recordings: Off</div><div class="t" style="left:117.58px;top:213.59px;font-size:8.52px;color:#2c74d4;font-weight:normal;transform:scaleX(0.989);transform-origin:left top">Multi-Take Recording: On</div><div class="t" style="left:79.73px;top:243.75px;font-size:6.56px;color:#8c8d8f;font-weight:normal;transform:scaleX(1.116);transform-origin:left top">When Multi-Take Recording is switched on, it will</div><div class="t" style="left:79.73px;top:251.80px;font-size:6.56px;color:#8c8d8f;font-weight:normal;transform:scaleX(1.117);transform-origin:left top">apply to every track in your song. If Merge</div><div class="t" style="left:79.74px;top:259.85px;font-size:6.56px;color:#8c8d8f;font-weight:normal;transform:scaleX(1.110);transform-origin:left top">Recordings is also enabled, then Multi-Take</div><div class="t" style="left:79.73px;top:267.90px;font-size:6.56px;color:#8c8d8f;font-weight:normal;transform:scaleX(1.122);transform-origin:left top">Recording will be disabled for the current track.</div><div class="t" style="left:327.83px;top:80.85px;font-size:6.56px;color:#c8c8c8;font-weight:bold;transform:scaleX(1.142);transform-origin:left top">9</div><div class="t" style="left:374.76px;top:80.85px;font-size:6.56px;color:#c8c8c8;font-weight:bold;transform:scaleX(1.044);transform-origin:left top">10</div><div class="t" style="left:421.54px;top:80.85px;font-size:6.56px;color:#c8c8c8;font-weight:bold;transform:scaleX(1.106);transform-origin:left top">11</div><div class="t" style="left:468.46px;top:80.85px;font-size:6.56px;color:#c8c8c8;font-weight:bold;transform:scaleX(1.044);transform-origin:left top">12</div><div class="t" style="left:515.26px;top:80.85px;font-size:6.56px;color:#c8c8c8;font-weight:bold;transform:scaleX(1.044);transform-origin:left top">13</div><div class="t" style="left:562.06px;top:80.85px;font-size:6.56px;color:#c8c8c8;font-weight:bold;transform:scaleX(1.044);transform-origin:left top">14</div><div class="t" style="left:608.96px;top:80.85px;font-size:6.56px;color:#c8c8c8;font-weight:bold;transform:scaleX(1.044);transform-origin:left top">15</div><div class="t" style="left:655.76px;top:80.85px;font-size:6.56px;color:#c8c8c8;font-weight:bold;transform:scaleX(1.044);transform-origin:left top">16</div><div class="t" style="left:680.93px;top:56.07px;font-size:11.03px;color:#c8c8c8;font-weight:bold;transform:scaleX(0.801);transform-origin:center top">?</div><div class="t" style="left:329.43px;top:104.01px;font-size:6.84px;color:#40c64a;font-weight:normal;transform:scaleX(1.093);transform-origin:left top">Upright</div><div class="t" style="left:422.63px;top:104.01px;font-size:6.84px;color:#40c64a;font-weight:normal;transform:scaleX(1.093);transform-origin:left top">Upright</div><div class="t" style="left:516.23px;top:104.01px;font-size:6.84px;color:#40c64a;font-weight:normal;transform:scaleX(1.093);transform-origin:left top">Upright</div><div class="t" style="left:609.63px;top:104.01px;font-size:6.84px;color:#40c64a;font-weight:normal;transform:scaleX(1.093);transform-origin:left top">Upright</div><div class="t" style="left:329.45px;top:153.89px;font-size:6.98px;color:#40c64a;font-weight:normal;transform:scaleX(1.014);transform-origin:left top">Retro Rock</div><div class="t" style="left:329.75px;top:204.59px;font-size:6.98px;color:#ecd682;font-weight:normal;transform:scaleX(0.997);transform-origin:left top">Logan</div><div class="t" style="left:329.44px;top:257.11px;font-size:6.84px;color:#40c64a;font-weight:normal;transform:scaleX(1.040);transform-origin:left top">Classic Clean</div><div class="t" style="left:334.41px;top:308.17px;font-size:6.42px;color:#6a9a6e;font-weight:normal;transform:scaleX(1.067);transform-origin:center top">3</div><div class="t" style="left:345.44px;top:308.15px;font-size:6.56px;color:#ffffff;font-weight:normal;transform:scaleX(1.087);transform-origin:left top">Grand Piano (3 takes)</div></body></html>
